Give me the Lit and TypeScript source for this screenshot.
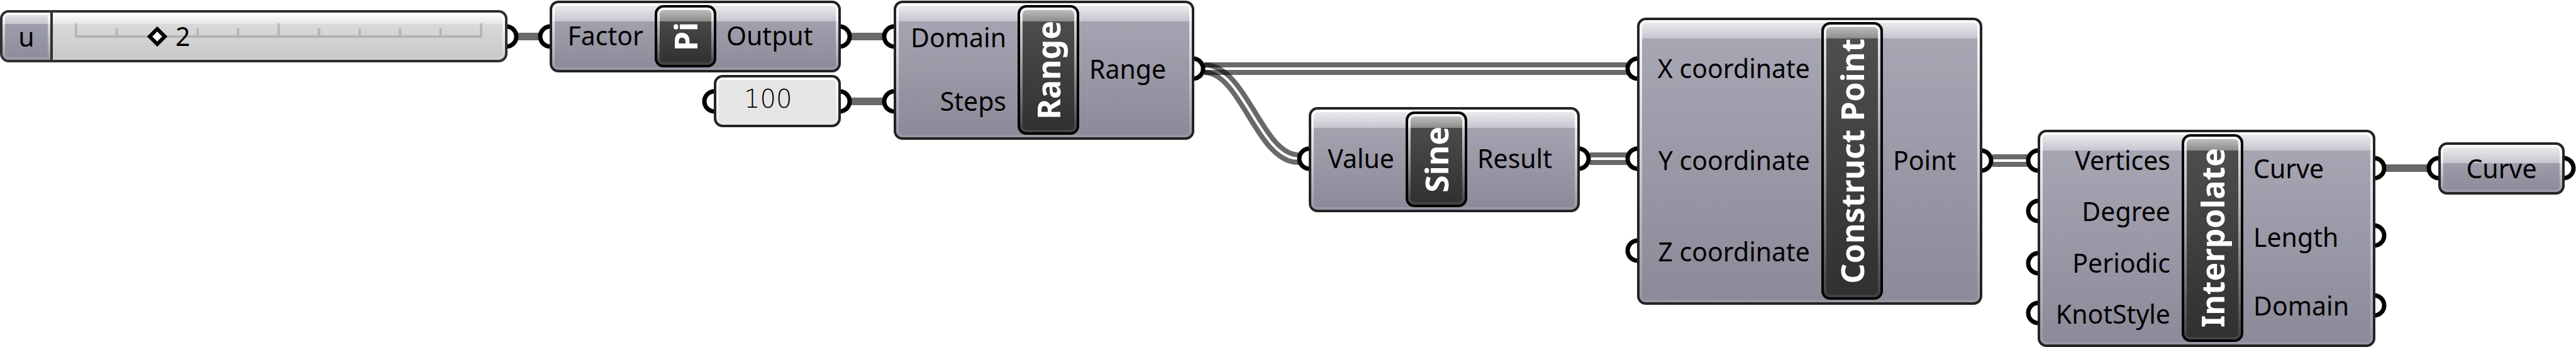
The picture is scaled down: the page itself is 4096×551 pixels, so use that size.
import { LitElement, html, svg, css, nothing } from "lit";
import { customElement, property, state } from "lit/decorators.js";
import { styleMap } from "lit/directives/style-map.js";

interface Box { x: number; y: number; w: number; h: number }
interface ComponentData extends Box { title: string; column: number; inputs: string[]; outputs: string[] }
interface Wire { x1: number; y1: number; x2: number; y2: number; list?: boolean }

const COMPONENTS: ComponentData[] = [
  { title: "Pi", x: 874, y: 1, w: 463, h: 114, column: 163, inputs: ["Factor"], outputs: ["Output"] },
  { title: "Range", x: 1421, y: 1, w: 478, h: 221, column: 193, inputs: ["Domain", "Steps"], outputs: ["Range"] },
  { title: "Sine", x: 2081, y: 170, w: 431, h: 167, column: 150, inputs: ["Value"], outputs: ["Result"] },
  { title: "Construct Point", x: 2603, y: 28, w: 549, h: 456, column: 289, inputs: ["X coordinate", "Y coordinate", "Z coordinate"], outputs: ["Point"] },
  { title: "Interpolate", x: 3240, y: 206, w: 537, h: 345, column: 225, inputs: ["Vertices", "Degree", "Periodic", "KnotStyle"], outputs: ["Curve", "Length", "Domain"] },
];
const SLIDER: Box = { x: 0, y: 16, w: 807, h: 83 };
const PANEL: Box = { x: 1135, y: 119, w: 202, h: 83 };
const PARAM: Box = { x: 3877, y: 226, w: 201, h: 83 };

const LEFT_GRIPS = [[874, 58], [1421, 58], [1421, 161], [1135, 161], [2081, 252], [2603, 109], [2603, 252], [2603, 398],
  [3240, 255], [3240, 335], [3240, 418], [3240, 497], [3877, 267]];
const RIGHT_GRIPS = [[807, 58], [1337, 58], [1337, 161], [1899, 109], [2512, 252], [3152, 255], [3777, 267], [3777, 374], [3777, 485], [4078, 267]];

const WIRES: Wire[] = [
  { x1: 824, y1: 58, x2: 858, y2: 58 },
  { x1: 1353, y1: 58, x2: 1405, y2: 58 },
  { x1: 1353, y1: 161, x2: 1405, y2: 161 },
  { x1: 1915, y1: 109, x2: 2587, y2: 109, list: true },
  { x1: 1915, y1: 109, x2: 2065, y2: 252, list: true },
  { x1: 2528, y1: 252, x2: 2587, y2: 252, list: true },
  { x1: 3168, y1: 255, x2: 3224, y2: 255, list: true },
  { x1: 3793, y1: 267, x2: 3861, y2: 267 },
];

const place = (b: Box) => styleMap({ left: `${b.x}px`, top: `${b.y}px`, width: `${b.w}px`, height: `${b.h}px` });

const wirePath = (w: Wire) => {
  const reach = (w.x2 - w.x1) * 0.42;
  return `M${w.x1} ${w.y1}C${w.x1 + reach} ${w.y1} ${w.x2 - reach} ${w.y2} ${w.x2} ${w.y2}`;
};

const capsule = css`
  * { box-sizing: border-box; }
  .capsule {
    position: relative;
    height: 100%;
    border: 4px solid #222424;
    border-radius: 14px;
    background:
      linear-gradient(#f0f0f2, #c6c6d0) 0 0 / 100% 29px no-repeat padding-box,
      linear-gradient(#a9a8b5, #8c8a98) padding-box;
  }
  .capsule::before {
    content: "";
    position: absolute;
    inset: 0;
    padding: 4px;
    border-radius: 10px;
    background: linear-gradient(rgba(255, 255, 255, 0.9), rgba(255, 255, 255, 0.1));
    mask: linear-gradient(#000 0 0) content-box exclude, linear-gradient(#000 0 0);
    pointer-events: none;
  }
`;

@customElement("gh-component")
class GhComponent extends LitElement {
  @property({ attribute: false }) data!: ComponentData;

  static styles = [capsule, css`
    :host { display: block; }
    .body { display: grid; padding: 3px 0 4px; }
    .ports { display: flex; flex-direction: column; padding: 0 16px 4px; margin: 0; list-style: none; white-space: nowrap; }
    .ports li { flex: 1; display: flex; align-items: center; line-height: 56px; min-height: 0; }
    .inputs { align-items: flex-end; padding-right: 18px; }
    .title {
      position: relative;
      display: flex;
      align-items: center;
      justify-content: center;
      margin: 0;
      border: 4px solid #000;
      border-radius: 14px;
      background:
        linear-gradient(#c8c8c8, #8c8c8c) 0 0 / 100% 22px no-repeat padding-box,
        linear-gradient(#505050, #303030) padding-box;
      color: #fff;
      font-size: 50px;
      font-weight: 700;
      line-height: 70px;
    }
    .title::before {
      content: "";
      position: absolute;
      inset: 0;
      padding: 4px;
      border-radius: 10px;
      background: linear-gradient(rgba(255, 255, 255, 0.85), rgba(255, 255, 255, 0.08));
      mask: linear-gradient(#000 0 0) content-box exclude, linear-gradient(#000 0 0);
    }
    .title span { writing-mode: vertical-rl; transform: rotate(180deg); white-space: nowrap; }
  `];

  render() {
    const d = this.data;
    return html`
      <section class="capsule body" aria-label=${d.title} style=${styleMap({ gridTemplateColumns: `${d.column}px 98px 1fr` })}>
        <ul class="ports inputs">${d.inputs.map((n) => html`<li>${n}</li>`)}</ul>
        <h2 class="title"><span>${d.title}</span></h2>
        <ul class="ports">${d.outputs.map((n) => html`<li>${n}</li>`)}</ul>
      </section>`;
  }
}

@customElement("gh-slider")
class GhSlider extends LitElement {
  @state() private value = 2;

  static styles = [capsule, css`
    :host { display: block; }
    .body {
      display: flex;
      border-color: #303030;
      background:
        linear-gradient(#ffffff, #e6e6e6) 0 0 / 100% 18px no-repeat padding-box,
        linear-gradient(#dfdfdf, #c8c8c8) padding-box;
    }
    .name {
      position: relative;
      flex: none;
      display: flex;
      align-items: center;
      justify-content: center;
      width: 80px;
      border-right: 4px solid #303030;
      border-radius: 10px 0 0 10px;
      background:
        linear-gradient(#e8e8ec, #c6c6d0) 0 0 / 100% 18px no-repeat padding-box,
        linear-gradient(#a4a3b1, #8e8c9a) padding-box;
    }
    .name::before {
      content: "";
      position: absolute;
      inset: 0;
      padding: 4px;
      border-radius: 10px 0 0 10px;
      background: linear-gradient(rgba(255, 255, 255, 0.8), rgba(255, 255, 255, 0.1));
      mask: linear-gradient(#000 0 0) content-box exclude, linear-gradient(#000 0 0);
    }
    .track { position: relative; flex: 1; display: grid; margin: 0 22px 0 21px; }
    .ticks, .range { grid-area: 1 / 1; width: 100%; height: 75px; margin: 0; }
    .range { appearance: none; background: none; outline: none; }
    .range::-webkit-slider-thumb {
      appearance: none;
      width: 32px;
      height: 32px;
      background: url("data:image/svg+xml,%3Csvg xmlns='http://www.w3.org/2000/svg' viewBox='0 0 32 32'%3E%3Cpath d='M16 4L28 16L16 28L4 16Z' fill='white' stroke='black' stroke-width='6'/%3E%3C/svg%3E");
    }
    .value { position: absolute; top: 0; line-height: 75px; pointer-events: none; }
  `];

  render() {
    return html`
      <div class="capsule body">
        <label class="name" for="u">u</label>
        <div class="track">
          <svg class="ticks" viewBox="0 0 676 75" preserveAspectRatio="none" aria-hidden="true" fill="none" stroke="#000" stroke-opacity="0.15" stroke-width="4">
            <path d="M14 38H662" />
            <path d=${Array.from({ length: 11 }, (_, i) => `M${16 + i * 64.4} 36V${i % 5 ? 25 : 17}`).join("")} />
          </svg>
          <input class="range" id="u" type="range" min="0" max="10" .value=${String(this.value)}
            @input=${(e: Event) => { this.value = Number((e.target as HTMLInputElement).value); }} />
          <output class="value" for="u" style=${styleMap({ left: `${46 + this.value * 64}px` })}>${this.value}</output>
        </div>
      </div>`;
  }
}

@customElement("gh-panel")
class GhPanel extends LitElement {
  static styles = [capsule, css`
    :host { display: block; }
    .body { display: flex; background: #e6e6e6; }
    .text {
      width: 100%;
      padding: 0 0 8px 44px;
      border: 0;
      border-radius: 10px;
      outline: none;
      background: none;
      color: #000;
      font: 200 40px/1 "DejaVu Sans Light", "DejaVu Sans", sans-serif;
    }
  `];

  render() {
    return html`<div class="capsule body"><input class="text" type="text" aria-label="Panel" value="100" /></div>`;
  }
}

@customElement("gh-param")
class GhParam extends LitElement {
  @property() name = "";

  static styles = [capsule, css`
    :host { display: block; }
    .body { display: flex; align-items: center; justify-content: center; padding-bottom: 2px; line-height: 56px; }
  `];

  render() {
    return html`<div class="capsule body">${this.name}</div>`;
  }
}

@customElement("app-root")
class AppRoot extends LitElement {
  static styles = css`
    :host {
      display: block;
      background: #fff;
      color: #000;
      font-family: "Noto Sans", "Open Sans", sans-serif;
      font-size: 41px;
    }
    .canvas { position: relative; min-height: 551px; overflow: hidden; }
    .wires { position: absolute; left: 0; top: 0; overflow: visible; }
    .node { position: absolute; }
  `;

  render() {
    return html`
      <main class="canvas">
        <svg class="wires" width="4096" height="551" fill="none" aria-hidden="true">
          <defs>
            ${WIRES.map((w, i) => w.list ? svg`
              <mask id="split${i}" maskUnits="userSpaceOnUse" x="0" y="0" width="4096" height="551">
                <rect width="4096" height="551" fill="#fff" />
                <path d=${wirePath(w)} stroke="#000" stroke-width="4" />
              </mask>` : nothing)}
          </defs>
          ${WIRES.map((w, i) => svg`
            <path d=${wirePath(w)} stroke="#000" stroke-opacity="0.59"
              stroke-width=${w.list ? 20 : 12} mask=${w.list ? `url(#split${i})` : nothing} />`)}
          <g fill="#fff" stroke="#000" stroke-width="7">
            ${LEFT_GRIPS.map(([x, y]) => svg`<circle cx=${x + 1} cy=${y} r="16" />`)}
            ${RIGHT_GRIPS.map(([x, y]) => svg`<circle cx=${x - 2} cy=${y} r="16" />`)}
          </g>
        </svg>
        <gh-slider class="node" style=${place(SLIDER)}></gh-slider>
        ${COMPONENTS.map((c) => html`<gh-component class="node" .data=${c} style=${place(c)}></gh-component>`)}
        <gh-panel class="node" style=${place(PANEL)}></gh-panel>
        <gh-param class="node" name="Curve" style=${place(PARAM)}></gh-param>
      </main>`;
  }
}
